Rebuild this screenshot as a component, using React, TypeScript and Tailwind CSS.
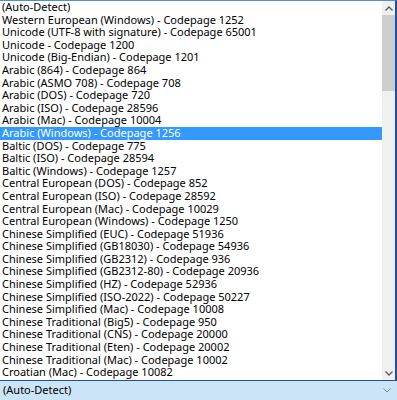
import React from 'react';

const items = [
  '(Auto-Detect)',
  'Western European (Windows) - Codepage 1252',
  'Unicode (UTF-8 with signature) - Codepage 65001',
  'Unicode - Codepage 1200',
  'Unicode (Big-Endian) - Codepage 1201',
  'Arabic (864) - Codepage 864',
  'Arabic (ASMO 708) - Codepage 708',
  'Arabic (DOS) - Codepage 720',
  'Arabic (ISO) - Codepage 28596',
  'Arabic (Mac) - Codepage 10004',
  'Arabic (Windows) - Codepage 1256',
  'Baltic (DOS) - Codepage 775',
  'Baltic (ISO) - Codepage 28594',
  'Baltic (Windows) - Codepage 1257',
  'Central European (DOS) - Codepage 852',
  'Central European (ISO) - Codepage 28592',
  'Central European (Mac) - Codepage 10029',
  'Central European (Windows) - Codepage 1250',
  'Chinese Simplified (EUC) - Codepage 51936',
  'Chinese Simplified (GB18030) - Codepage 54936',
  'Chinese Simplified (GB2312) - Codepage 936',
  'Chinese Simplified (GB2312-80) - Codepage 20936',
  'Chinese Simplified (HZ) - Codepage 52936',
  'Chinese Simplified (ISO-2022) - Codepage 50227',
  'Chinese Simplified (Mac) - Codepage 10008',
  'Chinese Traditional (Big5) - Codepage 950',
  'Chinese Traditional (CNS) - Codepage 20000',
  'Chinese Traditional (Eten) - Codepage 20002',
  'Chinese Traditional (Mac) - Codepage 10002',
  'Croatian (Mac) - Codepage 10082',
];

const SELECTED = 10;

const Chevron: React.FC<{ up?: boolean }> = ({ up }) => (
  <svg width="8" height="5" viewBox="0 0 8 5" className={up ? 'rotate-180' : ''}>
    <path d="M0.5 0.5 L4 4 L7.5 0.5" fill="none" stroke="#5a5a5a" strokeWidth="1.3" />
  </svg>
);

export default function App() {
  return (
    <div
      className="w-[397px] h-[400px] flex flex-col bg-white text-black text-[11px] overflow-hidden"
      style={{ fontFamily: '"Noto Sans", "Open Sans", sans-serif' }}
    >
      <div className="flex h-[380px] border-t border-t-[#4f8fd6] border-r-2 border-r-[#1e4fa0]">
        <ul className="flex-1 flex flex-col">
          {items.map((label, i) => (
            <li
              key={label}
              className={
                'h-[12.6px] leading-[12.6px] pl-[2px] whitespace-nowrap ' +
                (i === SELECTED ? 'bg-[#3399ff] text-white' : '')
              }
            >
              {label}
            </li>
          ))}
        </ul>
        <div className="w-[13px] bg-[#f0f0f0] flex flex-col items-center">
          <div className="h-[14px] w-full flex items-center justify-center">
            <Chevron up />
          </div>
          <div className="h-[76px] w-full bg-[#cdcdcd]" />
          <div className="flex-1" />
          <div className="h-[14px] w-full flex items-center justify-center">
            <Chevron />
          </div>
        </div>
      </div>
      <div className="flex-1 flex items-center justify-between border-t border-t-[#1f4fa8] bg-[#cce4f7] pl-[3px] pr-[6px]">
        <span>(Auto-Detect)</span>
        <svg width="8" height="5" viewBox="0 0 8 5">
          <path d="M0.5 0.5 L4 4 L7.5 0.5" fill="none" stroke="#7a8a99" strokeWidth="1" />
        </svg>
      </div>
    </div>
  );
}
